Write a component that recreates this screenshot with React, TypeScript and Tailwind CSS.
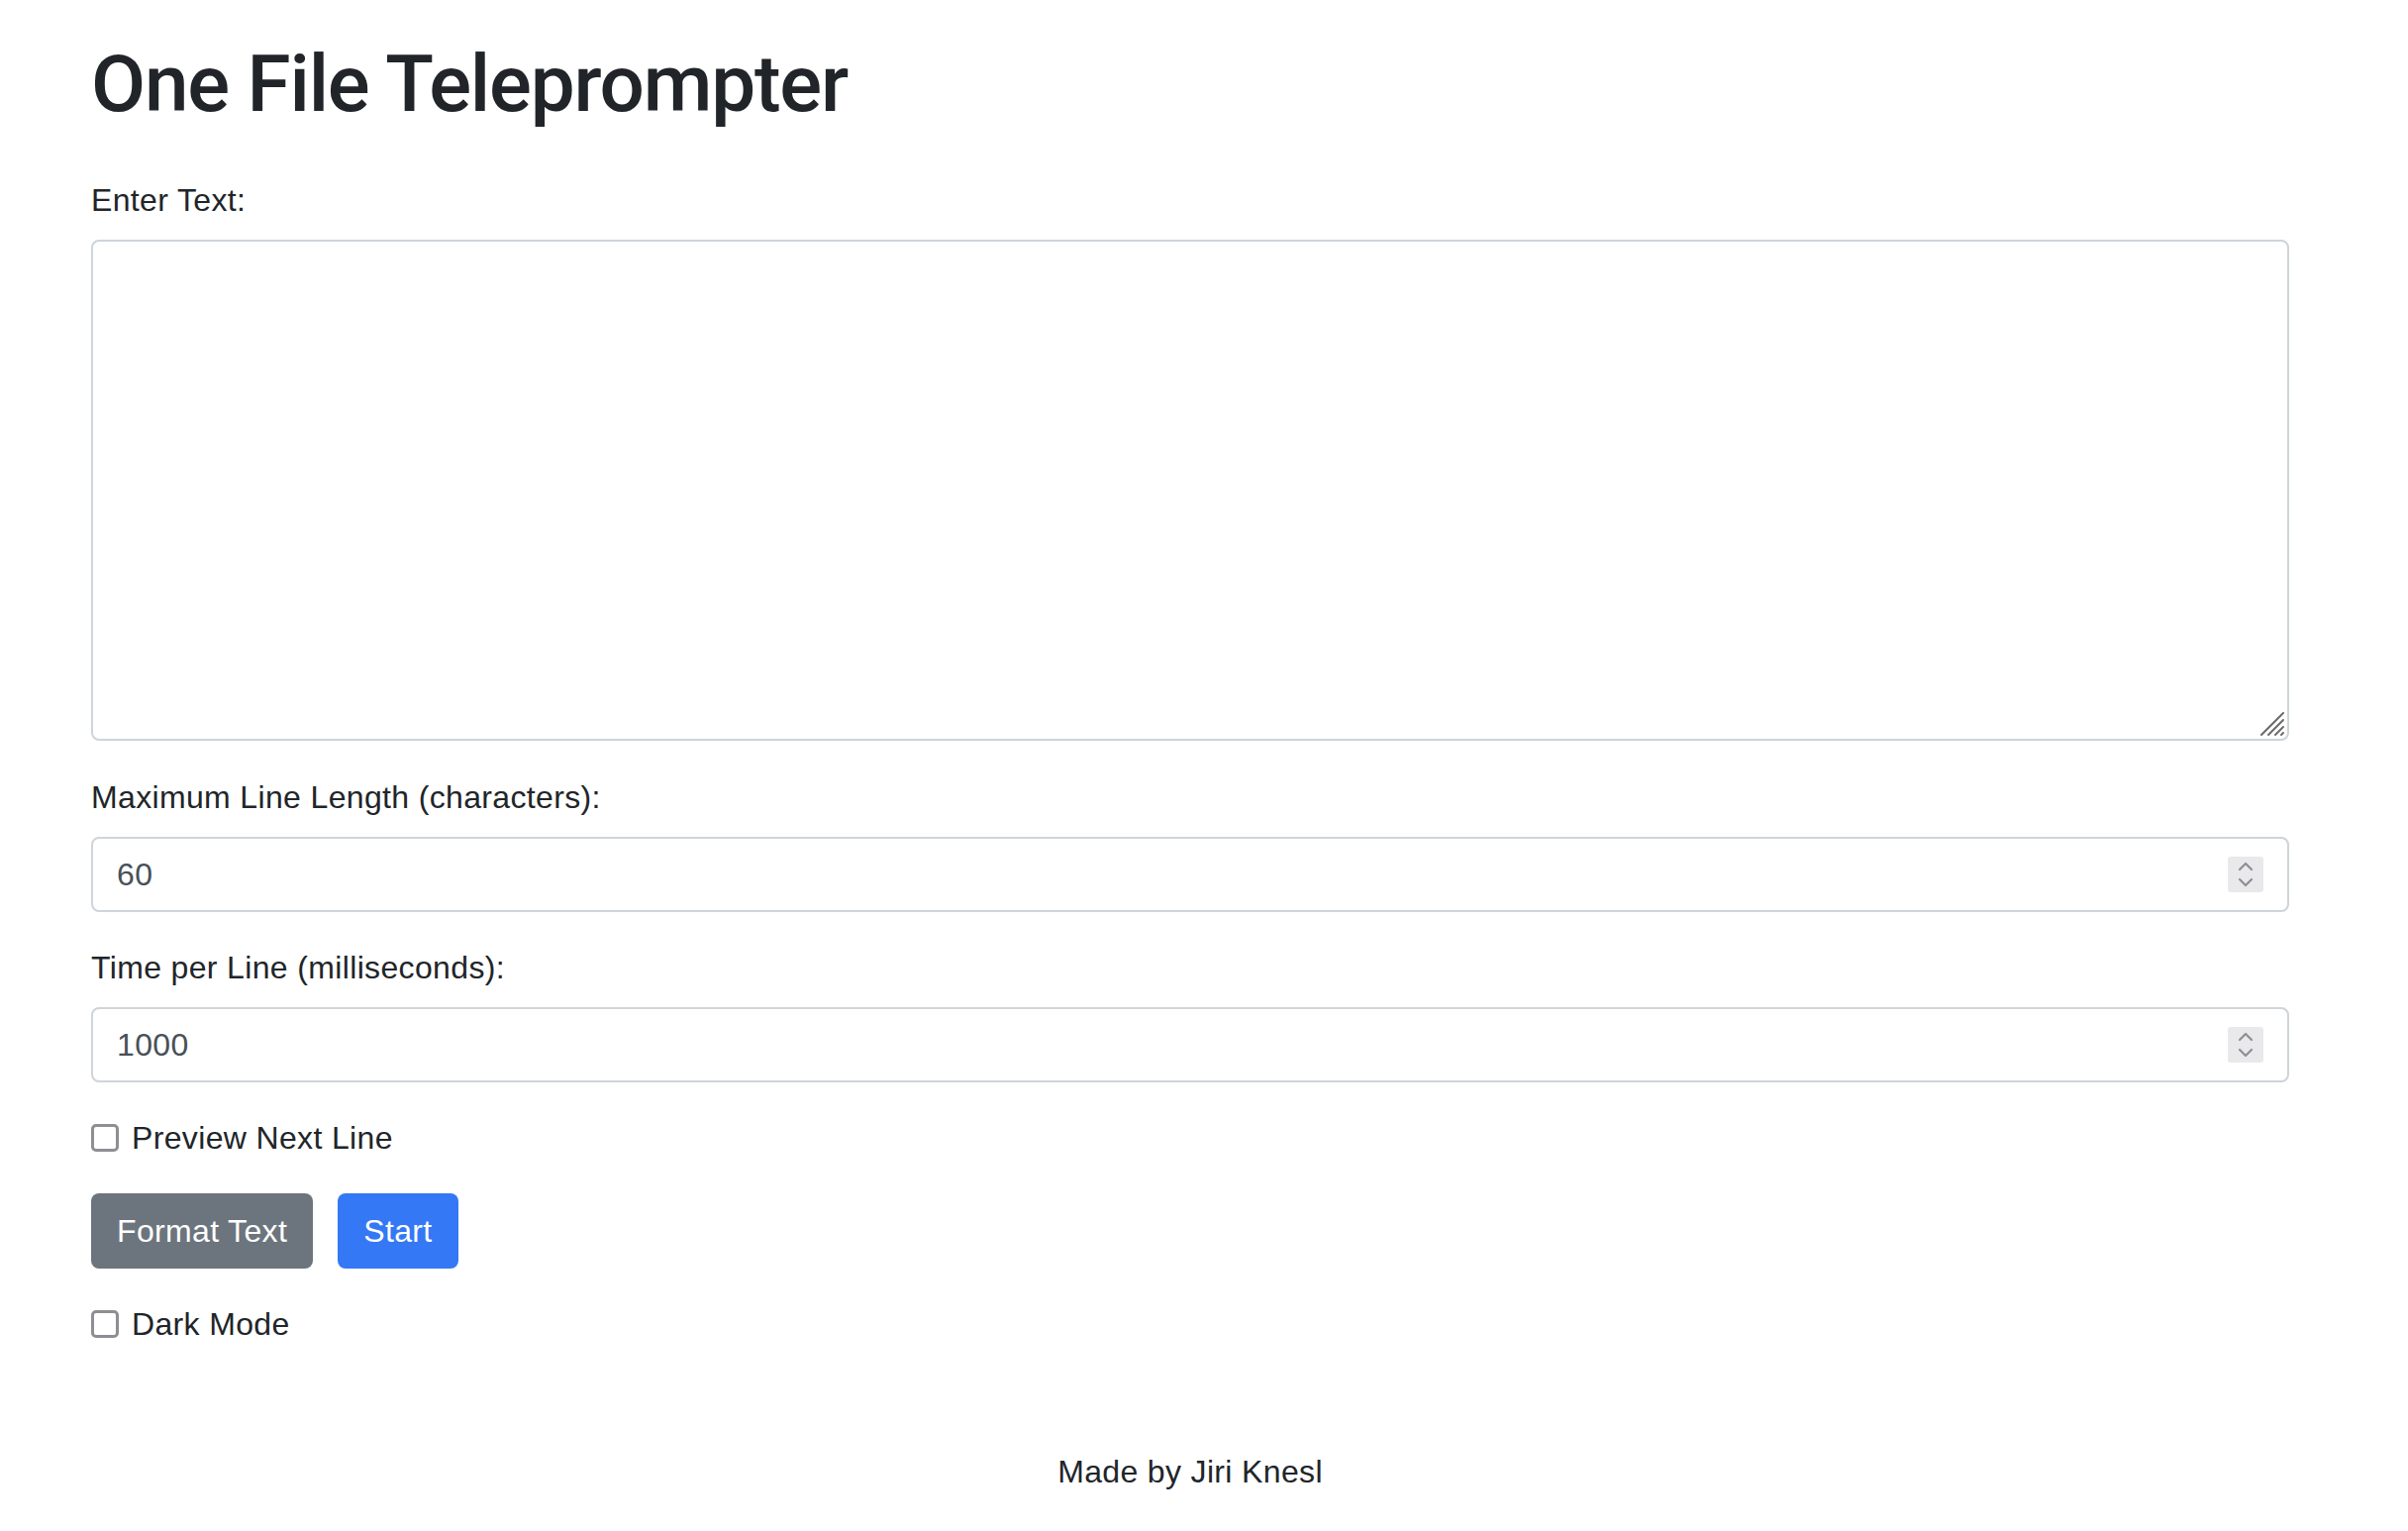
import { useState } from 'react';

function Spinner() {
  return (
    <div className="w-[36px] h-[36px] rounded-[3px] bg-[#e9e9ec] shrink-0">
      <svg width="36" height="36" viewBox="0 0 36 36" fill="none">
        <path d="M12 13 L18 7 L24 13" stroke="#8e8e93" strokeWidth="2.2" strokeLinecap="round" strokeLinejoin="round" />
        <path d="M12 23 L18 29 L24 23" stroke="#8e8e93" strokeWidth="2.2" strokeLinecap="round" strokeLinejoin="round" />
      </svg>
    </div>
  );
}

function NumberField({ value, onChange }: { value: string; onChange: (v: string) => void }) {
  return (
    <div className="flex items-center h-[76px] border-2 border-[#ced4da] rounded-[8px] bg-white px-[24px]">
      <input
        type="text"
        value={value}
        onChange={(e) => onChange(e.target.value)}
        className="flex-1 min-w-0 bg-transparent outline-none text-[32px] text-[#495057]"
      />
      <Spinner />
    </div>
  );
}

function Check({ label }: { label: string }) {
  const [on, setOn] = useState(false);
  return (
    <label className="flex items-center gap-[13px] h-[48px] text-[32px] leading-[48px] text-[#212529]">
      <input
        type="checkbox"
        checked={on}
        onChange={() => setOn(!on)}
        className="appearance-none w-[28px] h-[28px] border-[3px] border-[#8e8e93] rounded-[5px] bg-white checked:bg-[#3478f6] checked:border-[#3478f6] shrink-0"
      />
      {label}
    </label>
  );
}

export default function App() {
  const [text, setText] = useState('');
  const [maxLen, setMaxLen] = useState('60');
  const [perLine, setPerLine] = useState('1000');

  return (
    <div className="min-h-screen bg-white font-['Liberation_Sans',Arial,sans-serif] tracking-[0.35px] text-[#212529]">
      <div className="ml-[92px] w-[2220px]">
        <h1 className="mt-[37px] font-['Roboto',Arial,sans-serif] font-medium text-[80px] leading-[96px] tracking-[-1.2px] text-[#212529]">
          One File Teleprompter
        </h1>

        {/* Text input */}
        <div className="mt-[45px]">
          <label className="block text-[32px] leading-[48px] mb-[16px]">Enter Text:</label>
          <div className="relative">
            <textarea
              value={text}
              onChange={(e) => setText(e.target.value)}
              className="block w-full h-[506px] border-2 border-[#ced4da] rounded-[8px] resize-none outline-none px-[24px] py-[12px] text-[32px] text-[#495057]"
            />
            <svg className="absolute right-[3px] bottom-[3px] pointer-events-none" width="28" height="28" viewBox="0 0 28 28">
              <g stroke="#6b6b6b" strokeWidth="2" strokeLinecap="round">
                <line x1="3" y1="25" x2="25" y2="3" />
                <line x1="10" y1="25" x2="25" y2="10" />
                <line x1="17" y1="25" x2="25" y2="17" />
                <line x1="23" y1="25" x2="25" y2="23" />
              </g>
            </svg>
          </div>
        </div>

        {/* Settings */}
        <div className="mt-[33px]">
          <label className="block text-[32px] leading-[48px] mb-[16px]">Maximum Line Length (characters):</label>
          <NumberField value={maxLen} onChange={setMaxLen} />
        </div>

        <div className="mt-[32px]">
          <label className="block text-[32px] leading-[48px] mb-[16px]">Time per Line (milliseconds):</label>
          <NumberField value={perLine} onChange={setPerLine} />
        </div>

        <div className="mt-[32px]">
          <Check label="Preview Next Line" />
        </div>

        <div className="mt-[32px] flex gap-[25px]">
          <button className="h-[76px] px-[26px] rounded-[8px] bg-[#6c757d] text-white text-[32px]">
            Format Text
          </button>
          <button className="h-[76px] px-[26px] rounded-[8px] bg-[#3478f6] text-white text-[32px]">
            Start
          </button>
        </div>

        <div className="mt-[32px]">
          <Check label="Dark Mode" />
        </div>

        <footer className="mt-[101px] text-center text-[32px] leading-[48px]">
          Made by Jiri Knesl
        </footer>
      </div>
    </div>
  );
}
